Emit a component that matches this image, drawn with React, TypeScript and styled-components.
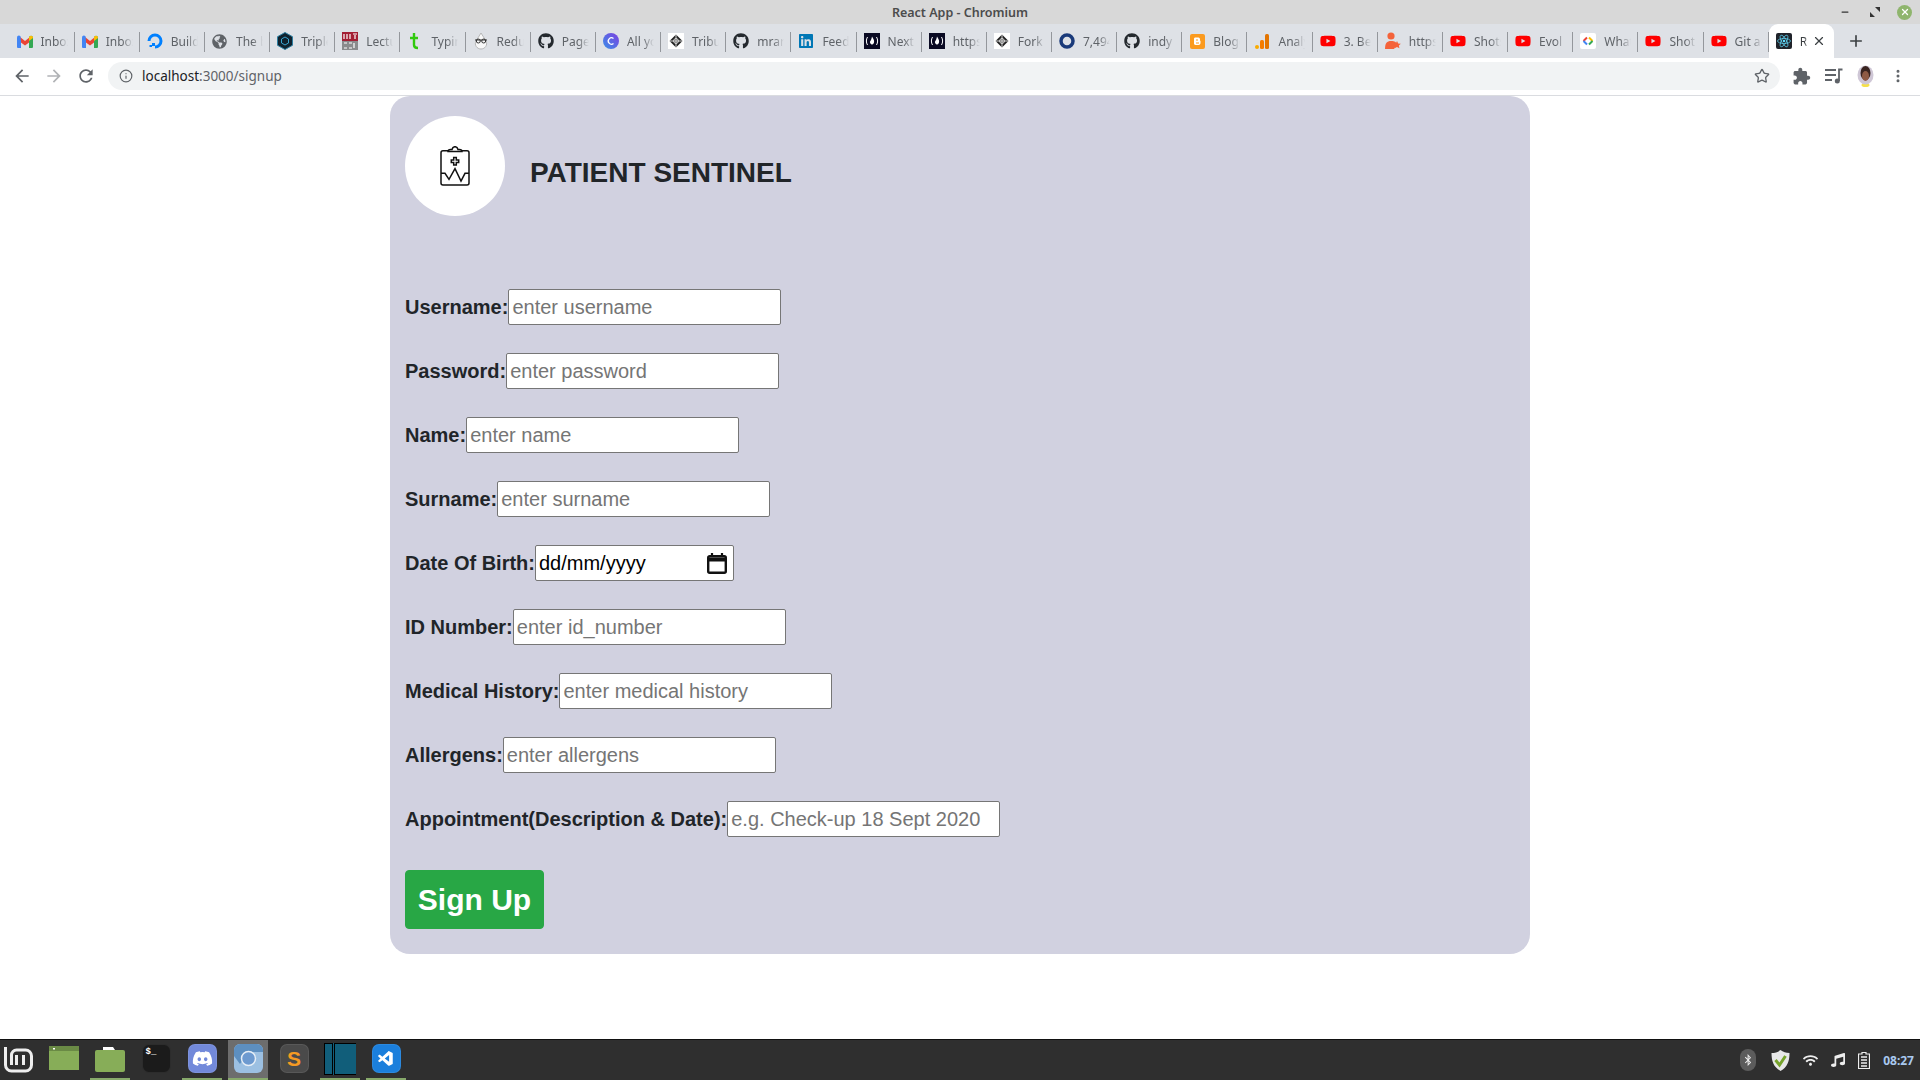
import React from "react";
import styled, { createGlobalStyle } from "styled-components";
import { Info, Star, X, Plus, EllipsisVertical, Minus } from "lucide-react";
import { FaGithub, FaLinkedin, FaYoutube, FaDiscord, FaBluetoothB, FaWifi, FaMusic, FaGlobeAmericas } from "react-icons/fa";
import { VscVscode } from "react-icons/vsc";

const GlobalStyle = createGlobalStyle`
  html, body {
    margin: 0;
    padding: 0;
    height: 100%;
    overflow: hidden;
    background: #fff;
  }
  * {
    box-sizing: border-box;
  }
`;

const Screen = styled.div`
  display: flex;
  flex-direction: column;
  width: 1920px;
  height: 1080px;
  font-family: "Liberation Sans", Arial, sans-serif;
`;

/* window title bar */
const TitleBar = styled.div`
  display: grid;
  grid-template-columns: 1fr auto 1fr;
  align-items: center;
  flex: 0 0 24px;
  background: #d8d8d8;
  font: 600 12.5px "Noto Sans", sans-serif;
  color: #4c4c4c;
`;

const WindowControls = styled.div`
  grid-column: 3;
  display: flex;
  justify-content: flex-end;
  align-items: center;
  gap: 14px;
  padding-right: 8px;
`;

const WindowButton = styled.span`
  display: flex;
  width: 16px;
  height: 16px;
  align-items: center;
  justify-content: center;
  color: #333;
`;

const CloseDot = styled.span`
  display: flex;
  width: 15px;
  height: 15px;
  border-radius: 50%;
  align-items: center;
  justify-content: center;
  background: #8fb56d;
  color: #fff;
`;

/* tab strip */
const TabStrip = styled.div`
  display: flex;
  align-items: stretch;
  flex: 0 0 34px;
  padding-left: 9.5px;
  background: #dee1e6;
`;

const Tab = styled.div`
  position: relative;
  display: flex;
  align-items: center;
  flex: 0 0 65.17px;
  padding-left: 7px;
  gap: 8px;
  overflow: hidden;
  font: 12px "Noto Sans", sans-serif;
  color: #5f6368;

  &::after {
    content: "";
    position: absolute;
    right: 0;
    top: 8px;
    height: 20px;
    width: 1px;
    background: #94979c;
  }
`;

const ActiveTab = styled(Tab)`
  background: #fff;
  border-radius: 9px 9px 0 0;
  color: #3c4043;

  &::after {
    display: none;
  }
`;

const TabTitle = styled.span`
  flex: 0 0 27px;
  white-space: nowrap;
  overflow: hidden;
  -webkit-mask-image: linear-gradient(to right, #000 60%, transparent 100%);
  mask-image: linear-gradient(to right, #000 60%, transparent 100%);
`;

const ActiveTitle = styled(TabTitle)`
  flex: 0 0 8px;
`;

const TabClose = styled.span`
  display: flex;
  margin-left: -4px;
  color: #3c4043;
`;

const NewTab = styled.div`
  display: flex;
  align-items: center;
  margin-left: 13px;
  color: #3c4043;
`;

const FaviconBox = styled.span<{ $color?: string }>`
  display: flex;
  flex: 0 0 16px;
  width: 16px;
  height: 16px;
  align-items: center;
  justify-content: center;
  color: ${(p) => p.$color || "#24292e"};
`;

/* toolbar */
const Toolbar = styled.div`
  display: flex;
  align-items: center;
  flex: 0 0 38px;
  padding: 0 0 1px 6px;
  background: #fff;
  border-bottom: 1px solid #dadce0;
`;

const NavButton = styled.span<{ $muted?: boolean }>`
  display: flex;
  flex: 0 0 32px;
  justify-content: center;
  color: ${(p) => (p.$muted ? "#b1b3b6" : "#5f6368")};
`;

const Omnibox = styled.div`
  display: flex;
  align-items: center;
  width: 1672px;
  height: 28px;
  margin-left: 6px;
  padding: 0 10px 0 11px;
  border-radius: 14px;
  background: #f1f3f4;
  font: 13.5px "Noto Sans", sans-serif;
  color: #5f6368;
`;

const Host = styled.span`
  margin-left: 9px;
  color: #202124;
`;

const OmniStar = styled.span`
  display: flex;
  margin-left: auto;
  color: #5f6368;
`;

const ToolActions = styled.div`
  display: flex;
  align-items: center;
  margin-left: 5.5px;
  color: #5f6368;
`;

const ToolSlot = styled.span`
  display: flex;
  flex: 0 0 32px;
  justify-content: center;
`;

/* page */
const Page = styled.main`
  flex: 1;
  background: #fff;
`;

const Panel = styled.section`
  width: 1140px;
  height: 858px;
  margin: 0 auto;
  padding: 20px 15px 25px;
  border-radius: 20px;
  background: #d1d1e0;
  color: #212529;
`;

const Brand = styled.header`
  display: flex;
  align-items: flex-start;
  margin-bottom: 73px;
`;

const LogoCircle = styled.div`
  display: flex;
  align-items: center;
  justify-content: center;
  width: 100px;
  height: 100px;
  border-radius: 50%;
  background: #fff;
`;

const BrandName = styled.h3`
  margin: 40px 0 0 25px;
  font-size: 28px;
  line-height: 34px;
  font-weight: 700;
`;

const Row = styled.div`
  display: flex;
  align-items: center;
  height: 36px;
  margin-bottom: 28px;
`;

const Label = styled.label`
  font-size: 20px;
  font-weight: 700;
`;

const Field = styled.input`
  width: 273px;
  height: 36px;
  padding: 1px 3px;
  border: 1px solid #767676;
  border-radius: 2px;
  background: #fff;
  font: 20px "Liberation Sans", Arial, sans-serif;
  color: #000;

  &::placeholder {
    color: #757575;
  }
`;

const DateBox = styled.div`
  display: flex;
  align-items: center;
  width: 199px;
  height: 36px;
  padding: 1px 6px 1px 3px;
  border: 1px solid #767676;
  border-radius: 2px;
  background: #fff;
`;

const DateText = styled.input`
  flex: 1;
  min-width: 0;
  padding: 0;
  border: none;
  outline: none;
  background: transparent;
  font: 20px "Liberation Sans", Arial, sans-serif;
  color: #000;
`;

const SubmitButton = styled.button`
  display: block;
  width: 139px;
  height: 59px;
  margin-top: 33px;
  border: 1px solid #28a745;
  border-radius: 4px;
  background: #28a745;
  color: #fff;
  font: 700 30px "Liberation Sans", Arial, sans-serif;
`;

/* desktop panel */
const Taskbar = styled.footer`
  display: flex;
  align-items: stretch;
  flex: 0 0 41px;
  background: #2f2f2f;
  border-top: 1px solid #111;
`;

const Launchers = styled.div`
  display: flex;
  gap: 6px;
  margin-left: -2px;
`;

const Launcher = styled.div<{ $open?: boolean; $active?: boolean }>`
  display: flex;
  align-items: center;
  justify-content: center;
  flex: 0 0 40px;
  padding-bottom: 1px;
  background: ${(p) => (p.$active ? "#6d6d6d" : "transparent")};
  border-bottom: 2px solid ${(p) => (p.$open ? "#87a96b" : "transparent")};
`;

const AppTile = styled.div<{ $bg: string; $color?: string }>`
  display: flex;
  align-items: center;
  justify-content: center;
  width: 29px;
  height: 29px;
  border-radius: 7px;
  border: 1px solid rgba(255, 255, 255, 0.08);
  background: ${(p) => p.$bg};
  color: ${(p) => p.$color || "#fff"};
`;

const TerminalGlyph = styled.span`
  align-self: flex-start;
  margin: 2px auto 0 3px;
  font: 700 9px "Liberation Mono", monospace;
`;

const SublimeGlyph = styled.span`
  font: 700 21px "Liberation Sans", sans-serif;
`;

const Tray = styled.div`
  display: flex;
  align-items: center;
  margin-left: auto;
  gap: 13px;
  padding-right: 6px;
  color: #eee;
`;

const BluetoothBadge = styled.span`
  display: flex;
  align-items: center;
  justify-content: center;
  width: 16px;
  height: 22px;
  margin-right: 2px;
  border-radius: 8px;
  background: #5c5c5c;
  color: #eee;
`;

const Clock = styled.span`
  font: 700 12px "Noto Sans", sans-serif;
  color: #a9c9ef;
`;

const BackIcon = () => (
  <svg width="20" height="20" viewBox="0 0 24 24" fill="currentColor">
    <path d="M20 11H7.830l5.590-5.590L12 4l-8 8 8 8 1.410-1.410L7.830 13H20v-2z" />
  </svg>
);

const ForwardIcon = () => (
  <svg width="20" height="20" viewBox="0 0 24 24" fill="currentColor">
    <path d="M12 4l-1.410 1.410L16.170 11H4v2h12.170l-5.580 5.590L12 20l8-8z" />
  </svg>
);

const ReloadIcon = () => (
  <svg width="20" height="20" viewBox="0 0 24 24" fill="currentColor">
    <path d="M17.650 6.350C16.200 4.900 14.210 4 12 4c-4.420 0-7.990 3.580-7.990 8s3.570 8 7.990 8c3.730 0 6.840-2.550 7.730-6h-2.080c-.82 2.330-3.040 4-5.650 4-3.310 0-6-2.690-6-6s2.690-6 6-6c1.660 0 3.140.69 4.220 1.780L13 11h7V4l-2.350 2.350z" />
  </svg>
);

const ExtensionIcon = () => (
  <svg width="19" height="19" viewBox="0 0 24 24" fill="currentColor">
    <path d="M20.500 11H19V7c0-1.100-.9-2-2-2h-4V3.500C13 2.120 11.880 1 10.500 1S8 2.120 8 3.500V5H4c-1.100 0-1.990.9-1.990 2v3.800H3.500c1.490 0 2.700 1.210 2.700 2.700s-1.210 2.700-2.700 2.700H2V20c0 1.100.9 2 2 2h3.800v-1.500c0-1.490 1.210-2.700 2.700-2.700 1.490 0 2.700 1.210 2.700 2.700V22H17c1.100 0 2-.9 2-2v-4h1.500c1.380 0 2.500-1.120 2.500-2.500S21.880 11 20.500 11z" />
  </svg>
);

const GmailIcon = () => (
  <svg width="16" height="13" viewBox="0 0 16 13">
    <path d="M3 2 8 6l5-4 1 1v3L8 10.500 2 6V3z" fill="#ea4335" />
    <path d="M0 3c0-2.500 2-3 3.500-1.800L4 6v7H1a1 1 0 0 1-1-1z" fill="#4285f4" />
    <path d="M12 6V2c1.500-2 4-1.500 4 1v9a1 1 0 0 1-1 1h-3z" fill="#34a853" />
    <path d="M12 6V2c1.500-2 4-1.500 4 1z" fill="#fbbc04" />
  </svg>
);

const DoIcon = () => (
  <svg width="16" height="16" viewBox="0 0 16 16" fill="none">
    <path d="M8 14a6 6 0 1 0-6-6" stroke="#0080ff" strokeWidth="3" />
    <path d="M5 10h3v3H5zM2.500 12H5v2H2.500z" fill="#0080ff" />
  </svg>
);

const HexIcon = () => (
  <svg width="16" height="18" viewBox="0 0 16 18">
    <path d="M8 .5 15.500 4.700v8.600L8 17.500.5 13.300V4.700z" fill="#10222e" stroke="#2b7ea1" />
    <path d="M8 5l3.500 2v4L8 13l-3.500-2V7z" fill="none" stroke="#38a3cf" />
  </svg>
);

const MitIcon = () => (
  <svg width="16" height="18" viewBox="0 0 16 18">
    <rect width="16" height="9" fill="#a31f34" />
    <rect y="9" width="16" height="9" fill="#8a8b8c" />
    <path d="M2 2v5M5 2v5M8 2v5M11 2h4M13 3v4M2 11h3M2 16h3M7 11h3M7 16h3M12 11v5" stroke="#fff" strokeWidth="1.200" />
  </svg>
);

const TypingIcon = () => (
  <svg width="16" height="18" viewBox="0 0 16 18" fill="none">
    <path d="M7 1v12c0 2 1 3 4 3M3 6h8" stroke="#31c90e" strokeWidth="2.400" />
  </svg>
);

const ReduxManIcon = () => (
  <svg width="16" height="18" viewBox="0 0 16 18" fill="none">
    <path d="M8 1 3 9c-2 4 1 8 5 8s7-4 5-8z" fill="#f8f8f8" stroke="#aaa" strokeWidth=".8" />
    <path d="M2 8h12" stroke="#333" />
    <circle cx="5.300" cy="9" r="2" stroke="#333" />
    <circle cx="10.700" cy="9" r="2" stroke="#333" />
  </svg>
);

const CanvaIcon = () => (
  <svg width="16" height="16" viewBox="0 0 16 16">
    <defs>
      <linearGradient id="canva" x1="0" y1="1" x2="1" y2="0">
        <stop offset="0" stopColor="#3a8fe8" />
        <stop offset="1" stopColor="#7d3fe0" />
      </linearGradient>
    </defs>
    <circle cx="8" cy="8" r="8" fill="url(#canva)" />
    <path d="M10.500 5.500a3.200 3.200 0 1 0 0 5" fill="none" stroke="#fff" strokeWidth="1.300" />
  </svg>
);

const CrosshairIcon = () => (
  <svg width="16" height="16" viewBox="0 0 16 16" fill="none">
    <rect width="16" height="16" fill="#fff" />
    <path d="M8 1.500 14.500 8 8 14.500 1.500 8z" fill="#222" />
    <path d="M8 1.500v13M1.500 8h13" stroke="#fff" strokeWidth=".8" />
    <circle cx="8" cy="8" r="2.400" stroke="#fff" strokeWidth=".8" />
  </svg>
);

const NextIcon = () => (
  <svg width="16" height="16" viewBox="0 0 16 16" fill="none">
    <rect width="16" height="16" fill="#0a0a23" />
    <path d="M3.500 4C2 6.500 2 9.500 3.500 12M12.500 4c1.500 2.500 1.500 5.500 0 8" stroke="#fff" />
    <path d="M8 3.500c1.500 2.500 2.500 4 2 6-.4 1.500-1.500 2-2 2s-1.600-.5-2-2c-.3-1.500 1.200-1.500 2-6z" fill="#fff" />
  </svg>
);

const RingIcon = () => (
  <svg width="16" height="16" viewBox="0 0 16 16" fill="none">
    <circle cx="8" cy="8" r="6" stroke="#1a3a7a" strokeWidth="3.500" />
  </svg>
);

const BloggerIcon = () => (
  <svg width="15" height="15" viewBox="0 0 15 15">
    <rect width="15" height="15" rx="2" fill="#fb9a1e" />
    <path d="M5.500 3.500h3c1 0 1.500 1 1.500 2v1l.5.500v2c0 1-.8 2-2 2h-3c-1 0-1.500-.8-1.500-1.500V5c0-1 .5-1.500 1.500-1.500z" fill="#fff" />
    <path d="M6 6h2M6 9h3" stroke="#fb9a1e" />
  </svg>
);

const AnalyticsIcon = () => (
  <svg width="16" height="16" viewBox="0 0 16 16">
    <circle cx="3" cy="14" r="2" fill="#f9ab00" />
    <rect x="6" y="7" width="4" height="9" rx="1.500" fill="#f57c00" />
    <rect x="11" y="1" width="4" height="15" rx="1.500" fill="#e37400" />
  </svg>
);

const PersonIcon = () => (
  <svg width="16" height="18" viewBox="0 0 16 18">
    <circle cx="6" cy="4" r="3.600" fill="#f4633a" />
    <path d="M0 17c0-6 2-8 6-8s5 1 6 3l-3 5z" fill="#f4633a" />
    <path d="M12 9l1.200 2.500 2.600.3-1.900 1.800.5 2.600-2.400-1.300-2.400 1.300.5-2.600-1.900-1.800 2.600-.3z" fill="#f4633a" />
  </svg>
);

const WhatIcon = () => (
  <svg width="16" height="16" viewBox="0 0 16 16" fill="none" strokeWidth="2">
    <rect width="16" height="16" rx="2" fill="#fff" />
    <path d="M7 4.500 3.500 8" stroke="#ea4335" />
    <path d="M3.500 8 7 11.500" stroke="#4285f4" />
    <path d="M9 4.500 12.500 8" stroke="#fbbc04" />
    <path d="M12.500 8 9 11.500" stroke="#34a853" />
  </svg>
);

const ReactTabIcon = () => (
  <svg width="16" height="16" viewBox="0 0 16 16" fill="none">
    <rect width="16" height="16" rx="2" fill="#20232a" />
    <g stroke="#61dafb" strokeWidth=".7">
      <ellipse cx="8" cy="8" rx="6.500" ry="2.500" />
      <ellipse cx="8" cy="8" rx="6.500" ry="2.500" transform="rotate(60 8 8)" />
      <ellipse cx="8" cy="8" rx="6.500" ry="2.500" transform="rotate(120 8 8)" />
    </g>
    <circle cx="8" cy="8" r="1.300" fill="#61dafb" />
  </svg>
);

const github = <FaGithub size={16} />;
const youtube = <FaYoutube size={16} color="#f00" />;

const tabs: { title: string; icon: React.ReactNode }[] = [
  { title: "Inbox (1)", icon: <GmailIcon /> },
  { title: "Inbox (3)", icon: <GmailIcon /> },
  { title: "Build", icon: <DoIcon /> },
  { title: "The best", icon: <FaGlobeAmericas size={15} color="#5f6368" /> },
  { title: "Triple", icon: <HexIcon /> },
  { title: "Lecture", icon: <MitIcon /> },
  { title: "Typing", icon: <TypingIcon /> },
  { title: "Redux", icon: <ReduxManIcon /> },
  { title: "Pages", icon: github },
  { title: "All you", icon: <CanvaIcon /> },
  { title: "Tribute", icon: <CrosshairIcon /> },
  { title: "mrar", icon: github },
  { title: "Feed", icon: <FaviconBox $color="#0077b5"><FaLinkedin size={16} /></FaviconBox> },
  { title: "Next", icon: <NextIcon /> },
  { title: "https", icon: <NextIcon /> },
  { title: "Fork", icon: <CrosshairIcon /> },
  { title: "7,494", icon: <RingIcon /> },
  { title: "indy", icon: github },
  { title: "Blogger", icon: <BloggerIcon /> },
  { title: "Analytics", icon: <AnalyticsIcon /> },
  { title: "3. Best", icon: youtube },
  { title: "https", icon: <PersonIcon /> },
  { title: "Shots", icon: youtube },
  { title: "Evol", icon: youtube },
  { title: "What", icon: <WhatIcon /> },
  { title: "Shot", icon: youtube },
  { title: "Git a", icon: youtube },
];

const fields: { label: string; placeholder: string; isDate?: boolean }[] = [
  { label: "Username:", placeholder: "enter username" },
  { label: "Password:", placeholder: "enter password" },
  { label: "Name:", placeholder: "enter name" },
  { label: "Surname:", placeholder: "enter surname" },
  { label: "Date Of Birth:", placeholder: "dd/mm/yyyy", isDate: true },
  { label: "ID Number:", placeholder: "enter id_number" },
  { label: "Medical History:", placeholder: "enter medical history" },
  { label: "Allergens:", placeholder: "enter allergens" },
  { label: "Appointment(Description & Date):", placeholder: "e.g. Check-up 18 Sept 2020" },
];

const ClipboardLogo = () => (
  <svg width="30" height="40" viewBox="0 0 30 40" fill="none" stroke="#111" strokeWidth="1.500">
    <path d="M8 4.800H3a2 2 0 0 0-2 2V37a2 2 0 0 0 2 2h24a2 2 0 0 0 2-2V6.800a2 2 0 0 0-2-2h-5" />
    <path d="M8 5.500c0-1.500 1-2 2.500-2H12c.5-2 1.500-2.800 3-2.800s2.500.8 3 2.800h1.500c1.500 0 2.500.5 2.500 2z" />
    <path d="M13.700 11.500h2.600v2.400h2.400v2.600h-2.400v2.400h-2.600v-2.400h-2.400v-2.600h2.400z" />
    <path d="M1 27.300h4l4 6 6-10.600 6 12.300 4-7.700h4" />
  </svg>
);

const CalendarIcon = () => (
  <svg width="20" height="21" viewBox="0 0 20 21" fill="none" stroke="#111">
    <rect x="1.200" y="3.200" width="17.600" height="16.600" rx="1.500" strokeWidth="2.400" />
    <path d="M1 6.500h18" strokeWidth="4" />
    <path d="M5 0v4M15 0v4" strokeWidth="2.200" />
  </svg>
);

const MintLogo = () => (
  <svg width="30" height="30" viewBox="0 0 30 30" fill="none" stroke="#eee" strokeWidth="3">
    <path d="M2.500 3v18a6 6 0 0 0 6 6h14a6 6 0 0 0 6-6V12a6 6 0 0 0-6-6h-9a5 5 0 0 0-5 5v10" />
    <path d="M13.500 21V11M20.500 21V11" />
  </svg>
);

const FilesWindow = () => (
  <svg width="30" height="25" viewBox="0 0 30 25">
    <rect width="30" height="24" fill="#87ad58" />
    <rect width="30" height="5" fill="#6a8a45" />
    <rect x="4" y="2" width="2" height="1.500" fill="#fff" />
  </svg>
);

const FolderGlyph = () => (
  <svg width="30" height="26" viewBox="0 0 30 26">
    <path d="M8 1h10l2 3H8z" fill="#fff" />
    <rect y="4" width="30" height="22" rx="2" fill="#87ad58" />
  </svg>
);

const ChromiumTile = () => (
  <svg width="29" height="29" viewBox="0 0 29 29" fill="none">
    <rect width="29" height="29" rx="6" fill="#9cc0e2" />
    <path d="M0 6a6 6 0 0 1 6-6h17a6 6 0 0 1 6 6v2H14L6 20 0 12z" fill="#5d8fc0" />
    <circle cx="14.500" cy="14.500" r="7" fill="#6d9ad0" stroke="#e6eef6" strokeWidth="1.500" />
  </svg>
);

const TealWindow = () => (
  <svg width="32" height="32" viewBox="0 0 32 32">
    <rect width="32" height="32" fill="#115e7a" />
    <path d="M.5 0v32M8.500 0v32M10.500 0v32M0 .5h8M11 .5h21M0 31.500h8M11 31.500h21" stroke="#000" />
  </svg>
);

const ShieldIcon = () => (
  <svg width="19" height="21" viewBox="0 0 19 21">
    <path d="M9.500 0C7 2 4 3 .5 3c0 8 2 14 9 18 7-4 9-10 9-18-3.500 0-6.500-1-9-3z" fill="#e8e8e8" />
    <path d="M4.500 10l4 5 6-9" fill="none" stroke="#76a32c" strokeWidth="3" />
  </svg>
);

const BatteryIcon = () => (
  <svg width="12" height="18" viewBox="0 0 12 18" fill="none" stroke="#eee">
    <path d="M4 1.500h4V3h3.500v14.500H.5V3H4z" strokeWidth="1.200" />
    <path d="M3 6h6M3 9h6M3 12h6M3 15h6" strokeWidth="1.500" />
  </svg>
);

const MediaIcon = () => (
  <svg width="18" height="16" viewBox="0 0 18 16" fill="none" stroke="#5f6368" strokeWidth="1.800">
    <path d="M0 2h11M0 7h11M0 12h7" />
    <path d="M14 13V1.500h3.500" />
    <circle cx="12.300" cy="13" r="1.600" fill="#5f6368" />
  </svg>
);

const ProfileAvatar = () => (
  <svg width="17" height="22" viewBox="0 0 17 22">
    <ellipse cx="8.500" cy="20" rx="4" ry="2" fill="#f5e04a" />
    <ellipse cx="8.500" cy="10" rx="8" ry="9.500" fill="#cfc7d6" />
    <ellipse cx="8.500" cy="8" rx="5" ry="7" fill="#3a2420" />
    <ellipse cx="8.500" cy="11" rx="3.500" ry="5" fill="#8f5a44" />
  </svg>
);

const App = () => {
  return (
    <Screen>
      <GlobalStyle />
      <TitleBar>
        <span />
        <span>React App - Chromium</span>
        <WindowControls>
          <WindowButton><Minus size={10} strokeWidth={3} /></WindowButton>
          <WindowButton>
            <svg width="10" height="10" viewBox="0 0 10 10" fill="#333">
              <path d="M5 0h5v5zM0 5l5 5H0z" />
            </svg>
          </WindowButton>
          <CloseDot><X size={10} strokeWidth={3} /></CloseDot>
        </WindowControls>
      </TitleBar>

      <TabStrip>
        {tabs.map((tab, i) => (
          <Tab key={i}>
            <FaviconBox>{tab.icon}</FaviconBox>
            <TabTitle>{tab.title}</TabTitle>
          </Tab>
        ))}
        <ActiveTab>
          <FaviconBox><ReactTabIcon /></FaviconBox>
          <ActiveTitle>React</ActiveTitle>
          <TabClose><X size={14} strokeWidth={2} /></TabClose>
        </ActiveTab>
        <NewTab><Plus size={18} strokeWidth={2.2} /></NewTab>
      </TabStrip>

      <Toolbar>
        <NavButton><BackIcon /></NavButton>
        <NavButton $muted><ForwardIcon /></NavButton>
        <NavButton><ReloadIcon /></NavButton>
        <Omnibox>
          <Info size={14} />
          <Host>localhost</Host>:3000/signup
          <OmniStar><Star size={16} strokeWidth={2} /></OmniStar>
        </Omnibox>
        <ToolActions>
          <ToolSlot><ExtensionIcon /></ToolSlot>
          <ToolSlot><MediaIcon /></ToolSlot>
          <ToolSlot><ProfileAvatar /></ToolSlot>
          <ToolSlot><EllipsisVertical size={16} strokeWidth={2.5} /></ToolSlot>
        </ToolActions>
      </Toolbar>

      <Page>
        <Panel>
          <Brand>
            <LogoCircle><ClipboardLogo /></LogoCircle>
            <BrandName>PATIENT SENTINEL</BrandName>
          </Brand>
          <form>
            {fields.map((f) => (
              <Row key={f.label}>
                <Label>{f.label}</Label>
                {f.isDate ? (
                  <DateBox>
                    <DateText type="text" defaultValue={f.placeholder} />
                    <CalendarIcon />
                  </DateBox>
                ) : (
                  <Field type="text" placeholder={f.placeholder} />
                )}
              </Row>
            ))}
            <SubmitButton type="button">Sign Up</SubmitButton>
          </form>
        </Panel>
      </Page>

      <Taskbar>
        <Launchers>
          <Launcher><MintLogo /></Launcher>
          <Launcher><FilesWindow /></Launcher>
          <Launcher $open><FolderGlyph /></Launcher>
          <Launcher>
            <AppTile $bg="#1b1b1b"><TerminalGlyph>$_</TerminalGlyph></AppTile>
          </Launcher>
          <Launcher $open>
            <AppTile $bg="#7289da"><FaDiscord size={21} /></AppTile>
          </Launcher>
          <Launcher $open $active><ChromiumTile /></Launcher>
          <Launcher>
            <AppTile $bg="#4a4a4a" $color="#f59a23"><SublimeGlyph>S</SublimeGlyph></AppTile>
          </Launcher>
          <Launcher $open><TealWindow /></Launcher>
          <Launcher $open>
            <AppTile $bg="#1b7fdc"><VscVscode size={18} /></AppTile>
          </Launcher>
        </Launchers>
        <Tray>
          <BluetoothBadge><FaBluetoothB size={12} /></BluetoothBadge>
          <ShieldIcon />
          <FaWifi size={15} />
          <FaMusic size={14} />
          <BatteryIcon />
          <Clock>08:27</Clock>
        </Tray>
      </Taskbar>
    </Screen>
  );
};

export default App;
